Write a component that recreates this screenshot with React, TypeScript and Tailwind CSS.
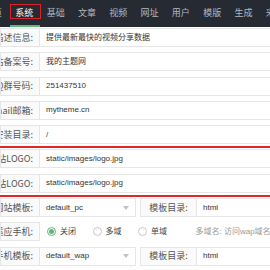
import React from 'react';

const tabs = ['首页', '系统', '基础', '文章', '视频', '网址', '用户', '模版', '生成', '采集'];

function Label({ text, className = '' }: { text: string; className?: string }) {
    return (
        <div className={`shrink-0 h-full bg-[#fafafa] border border-[#e6e6e6] flex items-center overflow-hidden whitespace-nowrap text-[9px] text-[#555] font-["Noto_Sans_CJK_SC",sans-serif] ${className}`}>
            {text}
        </div>
    );
}

function Field({ children, className = '' }: { children?: React.ReactNode; className?: string }) {
    return (
        <div className={`h-full border border-[#e6e6e6] border-l-0 pl-[6px] flex items-center whitespace-nowrap overflow-hidden ${className}`}>
            {children}
        </div>
    );
}

function Row({ label, value }: { label: string; value: string }) {
    return (
        <div className="flex h-[19px]">
            <Label text={label} className="w-[40px] justify-end pr-[6px]" />
            <Field className="flex-1 -mr-[2px]">{value}</Field>
        </div>
    );
}

function SelectRow({ label, value }: { label: string; value: string }) {
    return (
        <div className="flex h-[19px]">
            <Label text={label} className="w-[40px] justify-end pr-[6px]" />
            <Field className="w-[96px] justify-between pr-[6px]">
                <span>{value}</span>
                <span className="w-0 h-0 border-x-[3px] border-x-transparent border-t-[4px] border-t-[#c2c2c2]" />
            </Field>
            <Label text="模板目录:" className="w-[57px] ml-[4px] justify-center" />
            <Field className="flex-1 -mr-[2px]">html</Field>
        </div>
    );
}

function Radio({ text, checked = false }: { text: string; checked?: boolean }) {
    return (
        <div className="flex items-center mr-[16.5px]">
            <span className={`w-[9px] h-[9px] rounded-full border flex items-center justify-center ${checked ? 'border-[#5fb878]' : 'border-[#c9c9c9]'}`}>
                {checked && <span className="w-[5px] h-[5px] rounded-full bg-[#5fb878]" />}
            </span>
            <span className="ml-[4px] text-[#444]">{text}</span>
        </div>
    );
}

export default function App() {
    return (
        <div className='w-[270px] h-[270px] overflow-hidden bg-white text-[8px] text-[#333] font-["Liberation_Sans","Noto_Sans_CJK_SC",sans-serif]'>
            <div className="h-[27px] bg-[#262a33] overflow-hidden">
                <div className="flex h-full ml-[-22.6px]">
                    {tabs.map((t) => {
                        const active = t === '系统';
                        return (
                            <div
                                key={t}
                                className={`relative shrink-0 w-[31.3px] h-full flex items-center justify-center text-[9px] whitespace-nowrap ${active ? 'text-white' : 'text-[#b4b6bb]'}`}
                            >
                                {t}
                                {active && (
                                    <>
                                        <span className="absolute left-[1px] right-[-1px] top-[4px] h-[15px] border-[1.5px] border-[#d8232a]" />
                                        <span className="absolute left-[1px] right-[0px] bottom-0 h-[2px] bg-[#5fb878]" />
                                    </>
                                )}
                            </div>
                        );
                    })}
                </div>
            </div>

            <div className="flex flex-col gap-[5.3px] pt-[1px]">
                <Row label="网站描述信息:" value="提供最新最快的视频分享数据" />
                <Row label="网站备案号:" value="我的主题网" />
                <Row label="QQ群号码:" value="251437510" />
                <Row label="Email邮箱:" value="mytheme.cn" />
                <Row label="安装目录:" value="/" />
                <div className="relative flex flex-col gap-[5.3px]">
                    <Row label="网站LOGO:" value="static/images/logo.jpg" />
                    <Row label="手机站LOGO:" value="static/images/logo.jpg" />
                    <span className="absolute -left-[3px] -right-[3px] -top-[3.5px] -bottom-[4px] border-2 border-[#e0262b]" />
                </div>
                <SelectRow label="网站模板:" value="default_pc" />
                <div className="flex h-[19px]">
                    <Label text="自适应手机:" className="w-[40px] justify-end pr-[6px]" />
                    <div className="flex items-center pl-[7px] whitespace-nowrap">
                        <Radio text="关闭" checked />
                        <Radio text="多域" />
                        <Radio text="单域" />
                        <span className="ml-[12px] text-[#999]">多域名: 访问wap域名会自动跳转</span>
                    </div>
                </div>
                <SelectRow label="手机模板:" value="default_wap" />
            </div>
        </div>
    );
}
